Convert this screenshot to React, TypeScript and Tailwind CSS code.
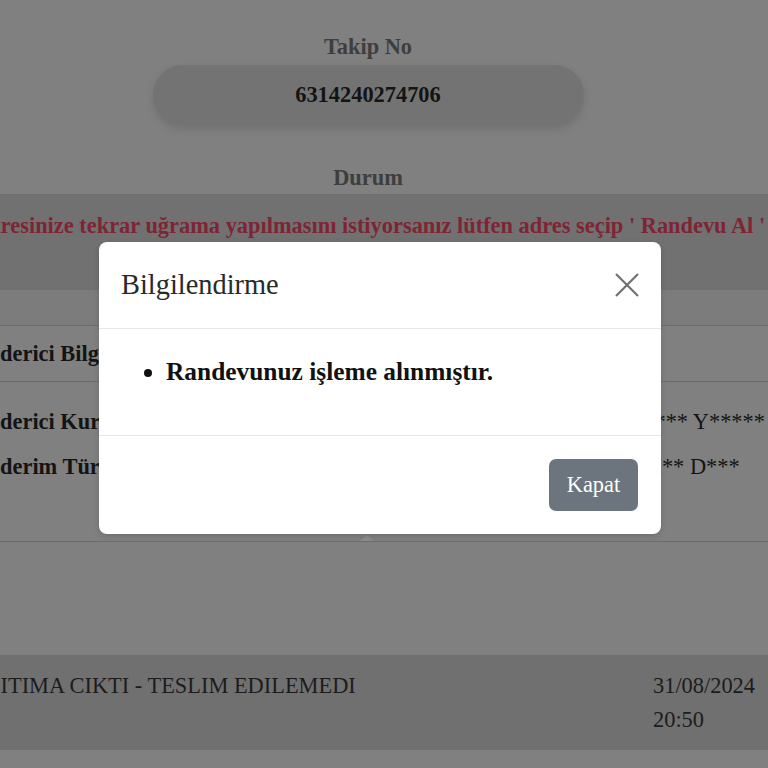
import React from "react";

export default function App() {
  const serif = { fontFamily: '"Liberation Serif", "Times New Roman", serif' };
  return (
    <div className="relative w-full h-[768px] overflow-hidden bg-[#808080]" style={serif}>
      <div className="w-[850px] -ml-[57px] text-[22.4px] leading-[33.6px]">
        {/* Takip No */}
        <div className="pt-[30px] flex flex-col items-center">
          <div className="font-bold text-[#3e3e3e]">Takip No</div>
          <div className="mt-px w-[431px] h-[60px] rounded-full bg-[#737373] shadow-[0_4px_8px_rgba(0,0,0,0.12)] flex items-center justify-center font-bold text-[#141414]">
            6314240274706
          </div>
          <div className="mt-[36px] font-bold text-[#3e3e3e]">Durum</div>
        </div>
        {/* Banner */}
        <div className="h-[96px] bg-[#717171] pt-[15px] pl-[66px] flex justify-center whitespace-nowrap">
          <span className="font-bold text-[#7e2535]">
            Gönderinin adresinize tekrar uğrama yapılmasını istiyorsanız lütfen adres seçip ' Randevu Al ' butonuna basınız.
          </span>
        </div>
        <div className="h-[35px] bg-[#7c7c7c]" />
        {/* Gönderici Bilgileri */}
        <div className="border-t border-[#6c6c6c] h-[56px] flex items-center pl-4 font-bold text-[#141414]">
          Gönderici Bilgileri
        </div>
        <div className="border-t border-[#6c6c6c] pt-[17px] pb-[52px] text-[#141414]">
          <div className="grid grid-cols-[683px_1fr] pl-4 h-[45px] items-center">
            <div className="font-bold">Gönderici Kurum</div>
            <div>S*** Y*****</div>
          </div>
          <div className="grid grid-cols-[683px_1fr] pl-4 h-[45px] items-center">
            <div className="font-bold">Gönderim Türü</div>
            <div>M** D***</div>
          </div>
        </div>
        <div className="relative border-t border-[#6c6c6c] h-[114px]">
          <div className="absolute left-[417px] -top-[7px] w-0 h-0 border-l-[7px] border-r-[7px] border-b-[6px] border-l-transparent border-r-transparent border-b-[#8c8c8c]" />
        </div>
        {/* History row */}
        <div className="bg-[#707070] h-[95px] pt-[14px] grid grid-cols-[701px_1fr] pl-[9px] text-[#1c1c1c]">
          <div>DAĞITIMA CIKTI - TESLIM EDILEMEDI</div>
          <div className="flex flex-col">
            <span>31/08/2024</span>
            <span>20:50</span>
          </div>
        </div>
      </div>

      {/* Modal */}
      <div className="absolute left-[99px] top-[242px] w-[562px] bg-white rounded-[8px] shadow-[0_2px_6px_rgba(0,0,0,0.15)]">
        <div className="h-[87px] pl-[22px] pr-[21px] flex items-center justify-between border-b border-[#e6e6e6]">
          <div className="text-[28.4px] leading-[42px] text-[#2a2a2a]">Bilgilendirme</div>
          <svg width="26" height="26" viewBox="0 0 26 26">
            <line x1="2" y1="2" x2="24" y2="24" stroke="#6f6f6f" strokeWidth="2.2" />
            <line x1="24" y1="2" x2="2" y2="24" stroke="#6f6f6f" strokeWidth="2.2" />
          </svg>
        </div>
        <div className="h-[107px] px-[22px] pt-[24px] border-b border-[#e6e6e6]">
          <ul className="list-disc pl-[45px]">
            <li className="text-[25.4px] leading-[37px] font-bold text-[#111]">Randevunuz işleme alınmıştır.</li>
          </ul>
        </div>
        <div className="h-[98px] flex items-center justify-end pr-[23px]">
          <button className="w-[89px] h-[52px] rounded-[7px] bg-[#6c757d] text-white text-[22.4px]" style={serif}>
            Kapat
          </button>
        </div>
      </div>
    </div>
  );
}
